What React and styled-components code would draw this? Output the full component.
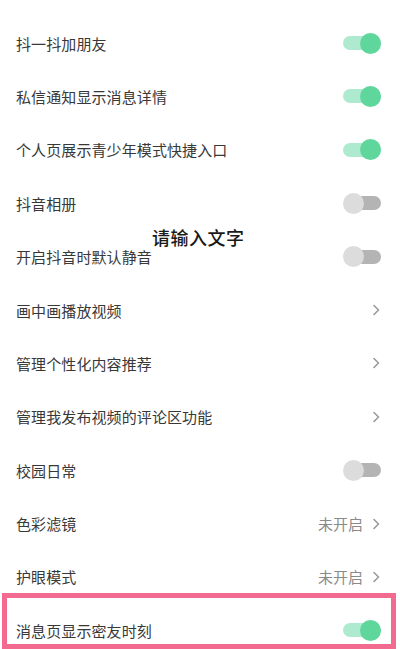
import React from 'react';
import styled, { createGlobalStyle } from 'styled-components';

const GlobalStyle = createGlobalStyle`
  html, body {
    margin: 0;
    padding: 0;
    background: #ffffff;
    overflow: hidden;
  }
  body {
    font-family: "Noto Sans CJK SC", "Noto Sans", sans-serif;
  }
`;

const rows = [
  { label: '', type: 'on' },
  { label: '抖一抖加朋友', type: 'on' },
  { label: '私信通知显示消息详情', type: 'on' },
  { label: '个人页展示青少年模式快捷入口', type: 'on' },
  { label: '抖音相册', type: 'off' },
  { label: '开启抖音时默认静音', type: 'off' },
  { label: '画中画播放视频', type: 'link' },
  { label: '管理个性化内容推荐', type: 'link' },
  { label: '管理我发布视频的评论区功能', type: 'link' },
  { label: '校园日常', type: 'off' },
  { label: '色彩滤镜', type: 'link', value: '未开启' },
  { label: '护眼模式', type: 'link', value: '未开启' },
  { label: '消息页显示密友时刻', type: 'on', marked: true },
];

export default function App() {
  return (
    <>
      <GlobalStyle />
      <Page>
        <List>
          {rows.map((r, i) => (
            <Row key={i}>
              <Label>{r.label}</Label>
              <Right>
                {r.value && <Value>{r.value}</Value>}
                {r.type === 'link' ? <Chevron /> : <Toggle $on={r.type === 'on'} />}
              </Right>
              {r.marked && <Highlight />}
              {i === 5 && <Hint>请输入文字</Hint>}
            </Row>
          ))}
        </List>
      </Page>
    </>
  );
}

const Chevron = () => (
  <svg width="9" height="12" viewBox="0 0 9 12" fill="none">
    <path d="M2 1.5 L6.5 6 L2 10.5" stroke="#9a9a9a" strokeWidth="1.6" strokeLinecap="round" strokeLinejoin="round" />
  </svg>
);

const Page = styled.div`
  width: 400px;
  height: 649px;
  overflow: hidden;
  position: relative;
  background: #ffffff;
`;

const List = styled.div`
  display: flex;
  flex-direction: column;
  margin-top: -37px;
`;

const Row = styled.div`
  position: relative;
  height: 53.4px;
  display: flex;
  align-items: center;
  justify-content: space-between;
  padding: 0 19px 0 16px;
  box-sizing: border-box;
`;

const Label = styled.div`
  font-size: 15px;
  color: #383838;
  letter-spacing: 0.1px;
`;

const Right = styled.div`
  display: flex;
  align-items: center;
  gap: 9px;
`;

const Value = styled.span`
  font-size: 15px;
  color: #8a8a8a;
`;

const Toggle = styled.div`
  position: relative;
  width: 38px;
  height: 21px;
  &::before {
    content: '';
    position: absolute;
    left: ${p => (p.$on ? '0' : '10px')};
    right: 0;
    top: 3.5px;
    height: 14px;
    border-radius: 7px;
    background: ${p => (p.$on ? '#aeead0' : '#b4b4b4')};
  }
  &::after {
    content: '';
    position: absolute;
    top: 0;
    left: ${p => (p.$on ? '17px' : '0')};
    width: 21px;
    height: 21px;
    border-radius: 50%;
    background: ${p => (p.$on ? '#5fd69b' : '#dcdcdc')};
  }
`;

const Highlight = styled.div`
  position: absolute;
  left: 2px;
  right: 4px;
  top: -11px;
  height: 56px;
  border: 5px solid #f26a90;
  box-sizing: border-box;
  pointer-events: none;
`;

const Hint = styled.div`
  position: absolute;
  left: 152px;
  top: -6px;
  font-size: 18px;
  color: #1a1a1a;
  font-weight: 500;
  letter-spacing: 0.5px;
`;
